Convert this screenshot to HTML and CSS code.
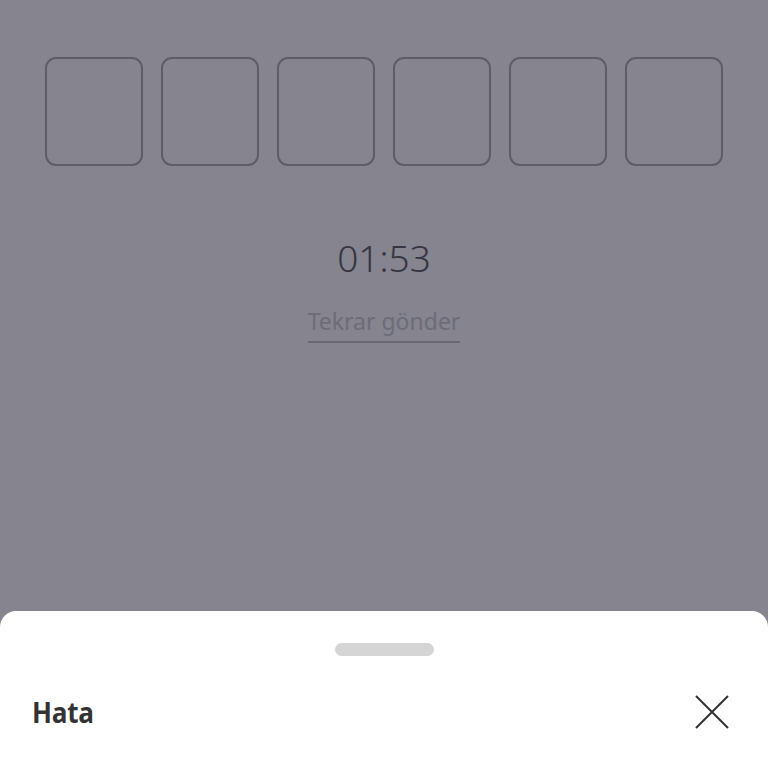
FILE: index.html
```html
<!DOCTYPE html>
<html lang="tr">
<head>
<meta charset="utf-8">
<link rel="stylesheet" href="styles.css">
</head>
<body>
<div class="page">
  <div class="content">
    <div class="code-row">
      <div class="code-box"></div>
      <div class="code-box"></div>
      <div class="code-box"></div>
      <div class="code-box"></div>
      <div class="code-box"></div>
      <div class="code-box"></div>
    </div>
    <div class="timer">01:53</div>
    <div class="resend">Tekrar gönder</div>
  </div>
  <div class="sheet">
    <div class="handle"></div>
    <div class="sheet-head">
      <div class="sheet-title">Hata</div>
      <svg class="close" width="34" height="34" viewBox="0 0 34 34">
        <path d="M1 1 L33 33 M33 1 L1 33" stroke="#333" stroke-width="2" fill="none"/>
      </svg>
    </div>
  </div>
</div>
</body>
</html>
```
FILE: styles.css
```css
html, body {
  margin: 0;
  padding: 0;
}
body {
  width: 768px;
  height: 768px;
  overflow: hidden;
  background: #85848f;
  font-family: "Noto Sans", "Open Sans", sans-serif;
}
.page {
  width: 768px;
  height: 768px;
  display: flex;
  flex-direction: column;
}
.content {
  flex: 1;
  display: flex;
  flex-direction: column;
  align-items: center;
  padding-top: 57px;
}
.code-row {
  display: flex;
  gap: 18px;
}
.code-box {
  box-sizing: border-box;
  width: 98px;
  height: 109px;
  border: 2px solid #5d5c67;
  border-radius: 11px;
}
.timer {
  margin-top: 67px;
  font-family: "Noto Sans", sans-serif;
  font-weight: 300;
  font-size: 37px;
  line-height: 50px;
  color: #363641;
}
.resend {
  margin-top: 23px;
  font-size: 23px;
  line-height: 30px;
  color: #6d6c77;
  padding-bottom: 5px;
  border-bottom: 2px solid #696873;
}
.sheet {
  height: 157px;
  background: #fff;
  border-radius: 16px 16px 0 0;
  display: flex;
  flex-direction: column;
  align-items: center;
}
.handle {
  margin-top: 32px;
  width: 99px;
  height: 13px;
  background: #d5d5d5;
  border-radius: 7px;
}
.sheet-head {
  align-self: stretch;
  display: flex;
  justify-content: space-between;
  align-items: center;
  padding: 0 39px 0 32px;
  margin-top: 36px;
}
.sheet-title {
  font-family: "Open Sans", sans-serif;
  font-weight: 700;
  font-size: 29px;
  color: #333;
  letter-spacing: -0.3px;
  transform: scaleX(0.9);
  transform-origin: left center;
}
.close {
  display: block;
}
```
